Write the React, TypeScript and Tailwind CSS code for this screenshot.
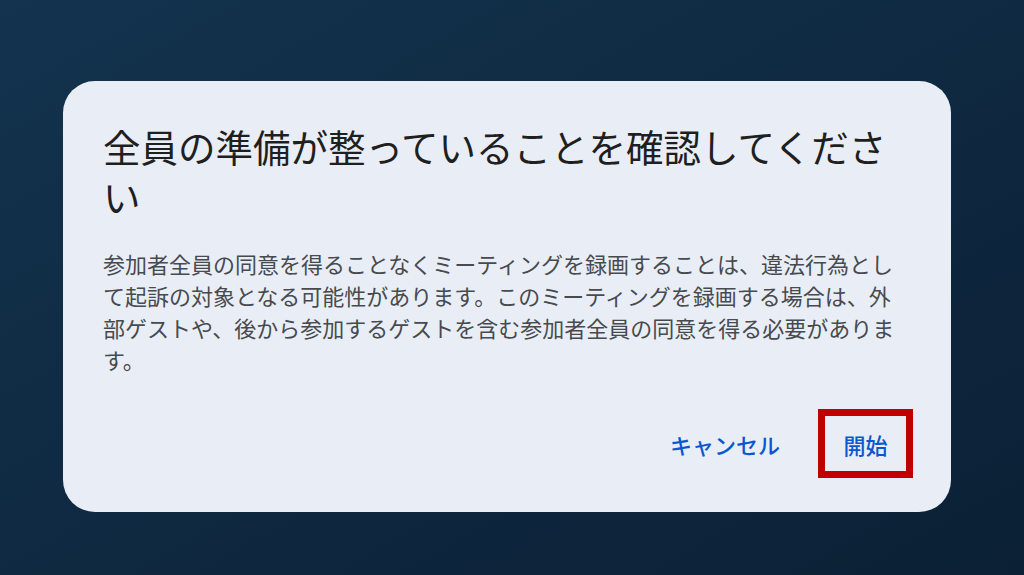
export default function App() {
  return (
    <div
      className="h-[575px] w-[1024px] overflow-hidden bg-gradient-to-br from-[#13334e] to-[#0b2035] pl-[63px] pt-[81px]"
      style={{ fontFamily: '"Noto Sans CJK JP", "Noto Sans", sans-serif' }}
    >
      <div className="w-[888px] rounded-[32px] bg-[#e9eef6] pl-[40px] pr-[38px] pt-[40px] pb-[34px]">
        <h1 className="pr-[2px] text-[37.5px] leading-[50px] font-normal text-[#1f1f1f]">
          全員の準備が整っていることを確認してください
        </h1>
        <p className="mt-[26px] pr-[2px] text-[22px] leading-[32px] text-[#474a4f]">
          参加者全員の同意を得ることなくミーティングを録画することは、違法行為として起訴の対象となる可能性があります。このミーティングを録画する場合は、外部ゲストや、後から参加するゲストを含む参加者全員の同意を得る必要があります。
        </p>
        <div className="mt-[34px] flex items-center justify-end">
          <button className="mr-[38px] text-[22px] leading-[32px] font-medium text-[#0b57d0]">
            キャンセル
          </button>
          <div className="flex h-[69px] w-[95px] items-center justify-center border-[7px] border-[#c00000]">
            <button className="text-[22px] leading-[32px] font-medium text-[#0b57d0]">
              開始
            </button>
          </div>
        </div>
      </div>
    </div>
  );
}
